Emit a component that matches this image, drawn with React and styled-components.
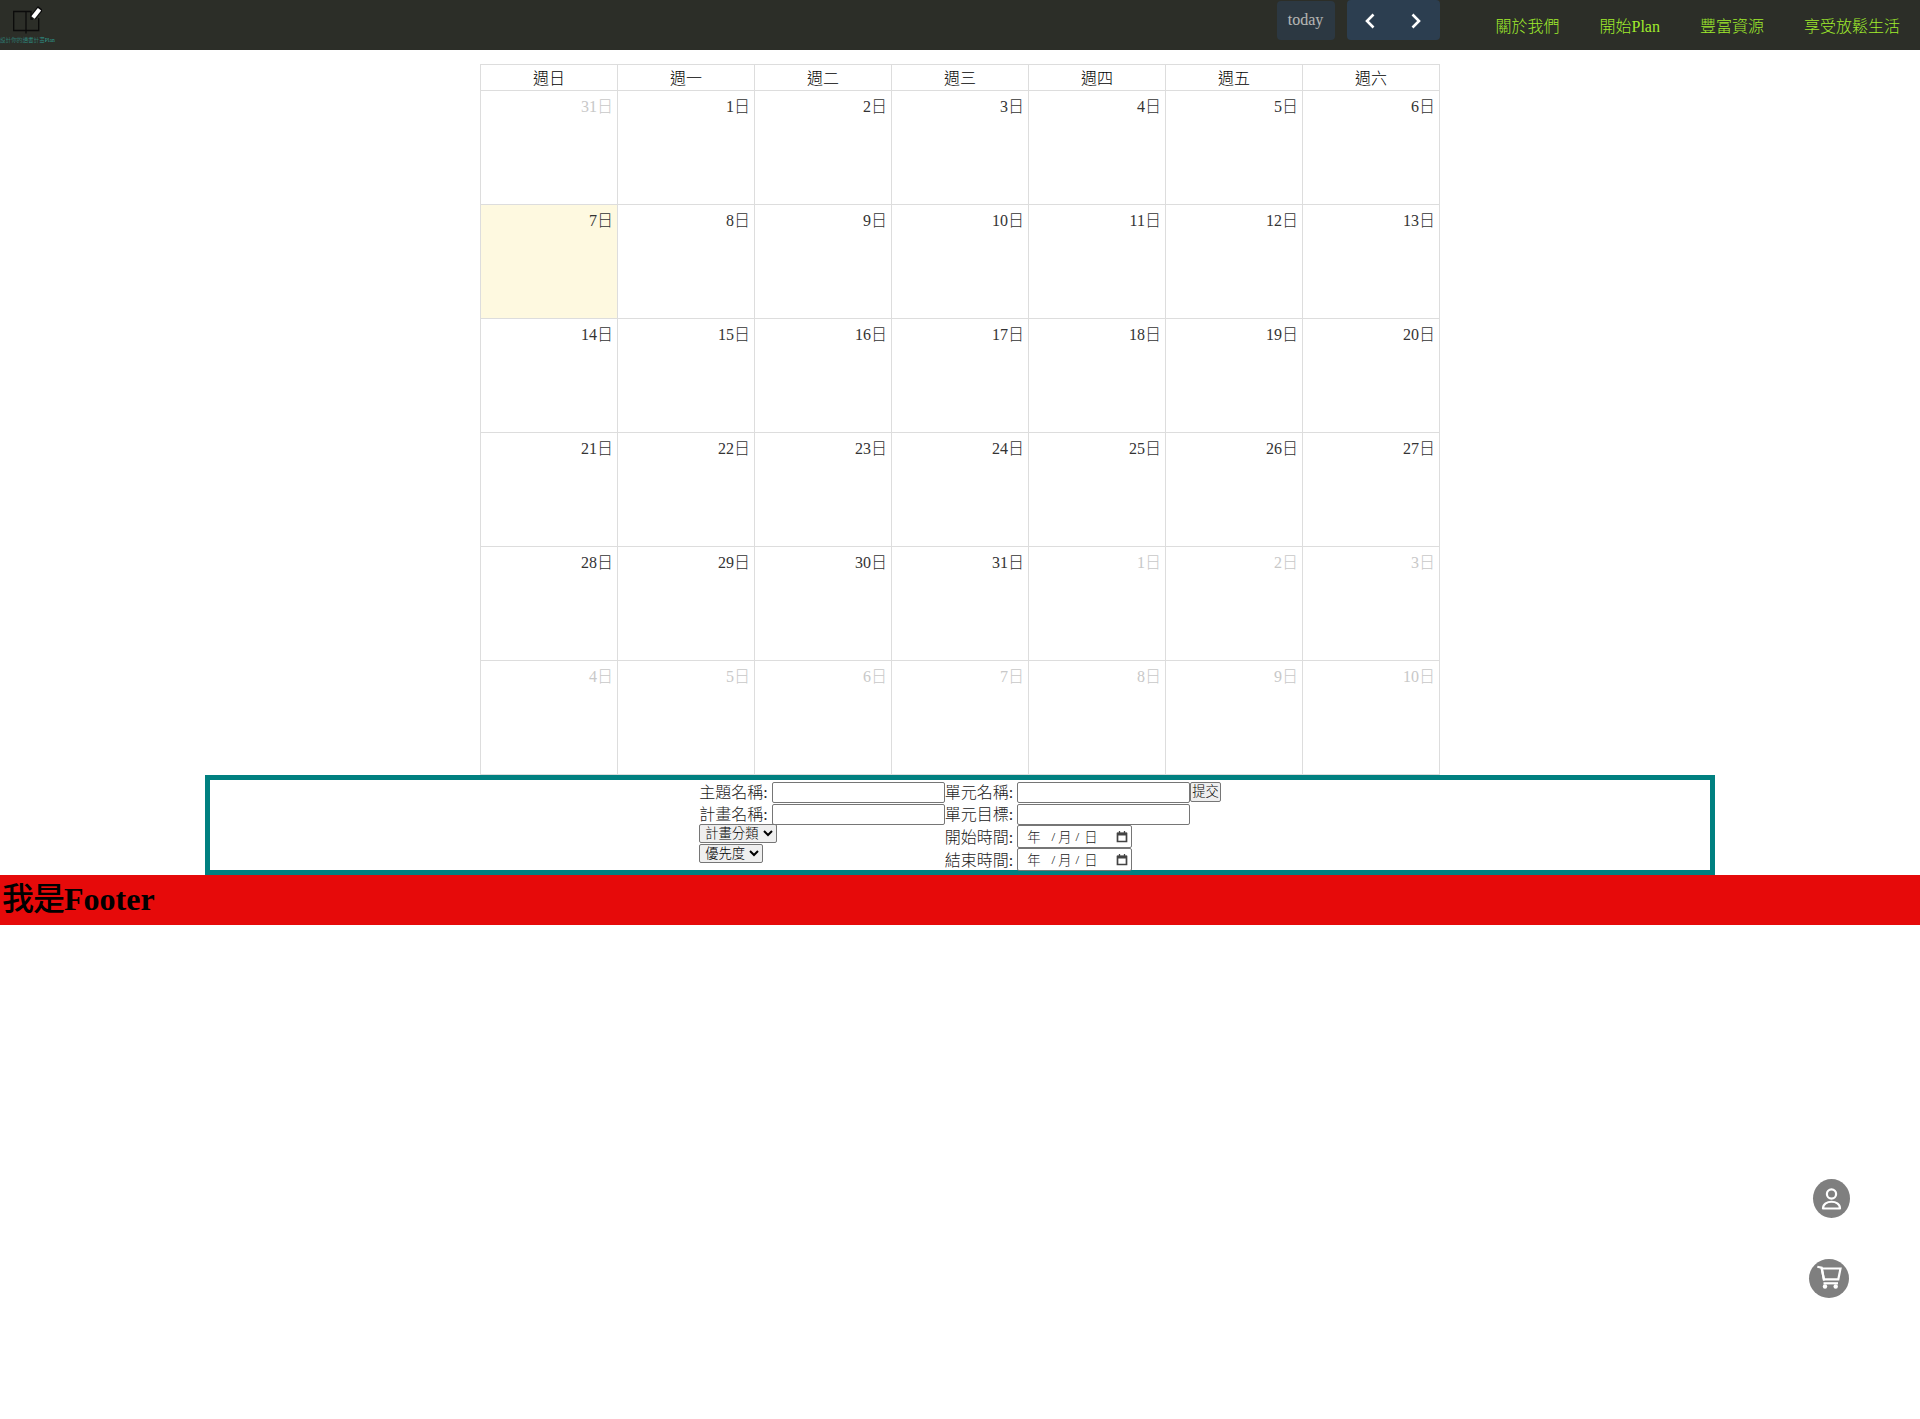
import React from 'react';
import styled, { createGlobalStyle } from 'styled-components';

const weekdays = ['週日', '週一', '週二', '週三', '週四', '週五', '週六'];

const rows = [
  [[31, true], [1], [2], [3], [4], [5], [6]],
  [[7, false, true], [8], [9], [10], [11], [12], [13]],
  [[14], [15], [16], [17], [18], [19], [20]],
  [[21], [22], [23], [24], [25], [26], [27]],
  [[28], [29], [30], [31], [1, true], [2, true], [3, true]],
  [[4, true], [5, true], [6, true], [7, true], [8, true], [9, true], [10, true]],
];

const serif = `"Liberation Serif", "Noto Sans CJK TC", serif`;

const Global = createGlobalStyle`
  html, body {
    margin: 0;
    padding: 0;
    background: #fff;
    font-family: ${serif};
    font-size: 16px;
    font-weight: 300;
    color: #000;
  }
`;

const Page = styled.div`
  position: relative;
  height: 1419px;
  overflow: hidden;
`;

const Header = styled.header`
  height: 50px;
  background: #2c2e28;
  display: flex;
  justify-content: space-between;
`;

const Logo = styled.div`
  width: 56px;
  display: flex;
  flex-direction: column;
  align-items: flex-start;
`;

const LogoText = styled.span`
  font-size: 5.6px;
  line-height: 7px;
  white-space: nowrap;
  color: #2f9d93;
`;

const HeaderRight = styled.div`
  display: flex;
  align-items: flex-start;
`;

const Toolbar = styled.div`
  display: flex;
  gap: 12px;
  margin-right: 56px;
`;

const TodayButton = styled.button`
  margin-top: 1px;
  width: 58px;
  height: 39px;
  border: 0;
  border-radius: 4px;
  background: #2c3e50;
  opacity: 0.65;
  color: #fff;
  font-family: ${serif};
  font-size: 16px;
  padding: 0 0 2px;
`;

const NavGroup = styled.div`
  display: flex;
  width: 93px;
  height: 40px;
  border-radius: 4px;
  background: #2c3e50;
`;

const NavButton = styled.button`
  flex: 1;
  border: 0;
  background: transparent;
  padding: 1px 0 0;
  display: flex;
  align-items: center;
  justify-content: center;
`;

const Links = styled.nav`
  display: flex;
  gap: 40px;
  padding: 16px 20px 0 0;
`;

const LinkItem = styled.a`
  color: #a0ec2c;
  font-size: 16px;
  line-height: 21px;
`;

const Calendar = styled.div`
  width: 960px;
  margin: 14px auto 0;
  border-top: 1px solid #ddd;
  border-left: 1px solid #ddd;
  box-sizing: border-box;
`;

const Row = styled.div`
  display: grid;
  grid-template-columns: repeat(7, 1fr);
`;

const HeadCell = styled.div`
  box-sizing: content-box;
  height: 24px;
  padding-top: 1px;
  line-height: 25px;
  text-align: center;
  font-size: 16px;
  border-right: 1px solid #ddd;
  border-bottom: 1px solid #ddd;
`;

const DayCell = styled.div`
  height: 113px;
  text-align: right;
  border-right: 1px solid #ddd;
  border-bottom: 1px solid #ddd;
  background: ${(p) => (p.$today ? '#fef9e0' : 'transparent')};
  color: ${(p) => (p.$muted ? '#c8c8c8' : '#333')};
`;

const DayNumber = styled.span`
  display: block;
  padding: 5px 4px 0 0;
  line-height: 22px;
`;

const FormBox = styled.form`
  box-sizing: border-box;
  width: 1510px;
  height: 100px;
  margin: 0 auto;
  border: 5px solid #008080;
  display: flex;
  justify-content: center;
`;

const FormInner = styled.div`
  display: flex;
  align-items: flex-start;
  padding-top: 1px;
`;

const Column = styled.div`
  display: flex;
  flex-direction: column;
  align-items: flex-start;
`;

const Field = styled.label`
  box-sizing: border-box;
  display: flex;
  align-items: center;
  height: ${(p) => p.$h || 22}px;
  padding-bottom: 2px;
  white-space: nowrap;
  font-size: 16px;
  color: #222;
`;

const TextInput = styled.input`
  box-sizing: border-box;
  width: 173px;
  height: 21px;
  margin: 2px 0 0 4px;
  border: 1px solid #767676;
  border-radius: 2px;
  padding: 1px 2px;
`;

const SelectStack = styled.div`
  display: flex;
  flex-direction: column;
  align-items: flex-start;
  gap: 1px;
  margin-top: -1px;
`;

const Select = styled.select`
  height: 19px;
  padding: 0 1px;
  font-family: ${serif};
  font-size: 13.33px;
  font-weight: 300;
  border-radius: 2px;
`;

const DateField = styled.span`
  box-sizing: border-box;
  width: 115px;
  height: 23px;
  margin: 2px 0 0 4px;
  border: 1px solid #767676;
  border-radius: 2px;
  display: flex;
  align-items: center;
  padding: 0 3px 0 9px;
  font-size: 13.33px;
`;

const DatePart = styled.span`
  margin-left: ${(p) => p.$gap || 0}px;
`;

const DateIcon = styled.svg`
  margin-left: auto;
`;

const SubmitButton = styled.button`
  height: 20px;
  margin-top: 1px;
  padding: 0 1px;
  border: 1px solid #767676;
  border-radius: 2px;
  background: #efefef;
  font-family: ${serif};
  font-size: 13.33px;
  font-weight: 300;
  line-height: 16px;
`;

const Footer = styled.footer`
  height: 50px;
  background: #e60a0a;
`;

const FooterTitle = styled.h1`
  margin: 0;
  padding-left: 2px;
  font-size: 32px;
  line-height: 48px;
  font-weight: bold;
  color: #000;
`;

const TitleCjk = styled.span`
  letter-spacing: -1px;
  font-weight: 500;
`;

const FloatButton = styled.div`
  position: absolute;
  background: #7f7f7f;
  border-radius: 50%;
  left: ${(p) => p.$x}px;
  top: ${(p) => p.$y}px;
  width: ${(p) => p.$w}px;
  height: 39px;
  display: flex;
`;

const Chevron = ({ flip }) => (
  <svg width="16" height="20" viewBox="0 0 16 20">
    <path d={flip ? 'M4.5 3.5l6.5 6.5-6.5 6.5' : 'M11.5 3.5L5 10l6.5 6.5'} fill="none" stroke="#fff" strokeWidth="2.6" />
  </svg>
);

const CalendarIcon = () => (
  <DateIcon width="12" height="13" viewBox="0 0 12 13">
    <path d="M1.5 3.5h9v8h-9z" fill="none" stroke="#444" strokeWidth="1.7" />
    <path d="M1 2.5h10v3H1z" fill="#444" />
    <path d="M3.5 1v2M8.5 1v2" stroke="#444" strokeWidth="1.3" />
  </DateIcon>
);

const BookLogo = () => (
  <svg width="42" height="37" viewBox="0 0 42 37">
    <path d="M26 11.5H13.7V30.5H38.7V18" fill="none" stroke="#0b0b0b" strokeWidth="1.3" />
    <path d="M26 11V33.5M26 11.5H31V19H33" fill="none" stroke="#0b0b0b" strokeWidth="1.3" />
    <path d="M33 17.5L40.5 8" stroke="#0b0b0b" strokeWidth="6.5" />
    <path d="M33 17.5L39.5 9.2" stroke="#fff" strokeWidth="4.2" />
  </svg>
);

const DateInput = () => (
  <DateField>
    <DatePart>年</DatePart>
    <DatePart $gap={11}>/</DatePart>
    <DatePart $gap={3}>月</DatePart>
    <DatePart $gap={4}>/</DatePart>
    <DatePart $gap={5}>日</DatePart>
    <CalendarIcon />
  </DateField>
);

export default function App() {
  return (
    <Page>
      <Global />
      <Header>
        <Logo>
          <BookLogo />
          <LogoText>設計你的讀書計畫Plan</LogoText>
        </Logo>
        <HeaderRight>
          <Toolbar>
            <TodayButton>today</TodayButton>
            <NavGroup>
              <NavButton><Chevron /></NavButton>
              <NavButton><Chevron flip /></NavButton>
            </NavGroup>
          </Toolbar>
          <Links>
            <LinkItem>關於我們</LinkItem>
            <LinkItem>開始Plan</LinkItem>
            <LinkItem>豐富資源</LinkItem>
            <LinkItem>享受放鬆生活</LinkItem>
          </Links>
        </HeaderRight>
      </Header>

      <Calendar>
        <Row>
          {weekdays.map((d) => <HeadCell key={d}>{d}</HeadCell>)}
        </Row>
        {rows.map((row, i) => (
          <Row key={i}>
            {row.map(([n, muted, today], j) => (
              <DayCell key={j} $muted={muted} $today={today}>
                <DayNumber>{n}日</DayNumber>
              </DayCell>
            ))}
          </Row>
        ))}
      </Calendar>

      <FormBox>
        <FormInner>
          <Column>
            <Field>主題名稱:<TextInput /></Field>
            <Field>計畫名稱:<TextInput /></Field>
            <SelectStack>
              <Select><option>計畫分類</option></Select>
              <Select><option>優先度</option></Select>
            </SelectStack>
          </Column>
          <Column>
            <Field>單元名稱:<TextInput /></Field>
            <Field>單元目標:<TextInput /></Field>
            <Field $h={23}>開始時間:<DateInput /></Field>
            <Field $h={23}>結束時間:<DateInput /></Field>
          </Column>
          <SubmitButton type="button">提交</SubmitButton>
        </FormInner>
      </FormBox>

      <Footer>
        <FooterTitle><TitleCjk>我是</TitleCjk>Footer</FooterTitle>
      </Footer>

      <FloatButton $x={1813} $y={1179} $w={37}>
        <svg width="37" height="39" viewBox="0 0 37 39">
          <circle cx="18.5" cy="15" r="4.6" fill="none" stroke="#fff" strokeWidth="2.2" />
          <path d="M10 29.5C10 20.5 27 20.5 27 29.5Z" fill="none" stroke="#fff" strokeWidth="2.2" strokeLinejoin="round" />
        </svg>
      </FloatButton>
      <FloatButton $x={1809} $y={1259} $w={40}>
        <svg width="40" height="39" viewBox="0 0 40 39">
          <path d="M8.3 7.7L12.7 8.7L15 21.5" fill="none" stroke="#fff" strokeWidth="2.2" />
          <path d="M12.7 9.5H31.5L29.3 20.3H15Z" fill="none" stroke="#fff" strokeWidth="2.2" />
          <path d="M14.5 24.3H29" stroke="#fff" strokeWidth="2.2" />
          <circle cx="16" cy="27.5" r="2.2" fill="#fff" />
          <circle cx="26.7" cy="27.5" r="2.2" fill="#fff" />
        </svg>
      </FloatButton>
    </Page>
  );
}
